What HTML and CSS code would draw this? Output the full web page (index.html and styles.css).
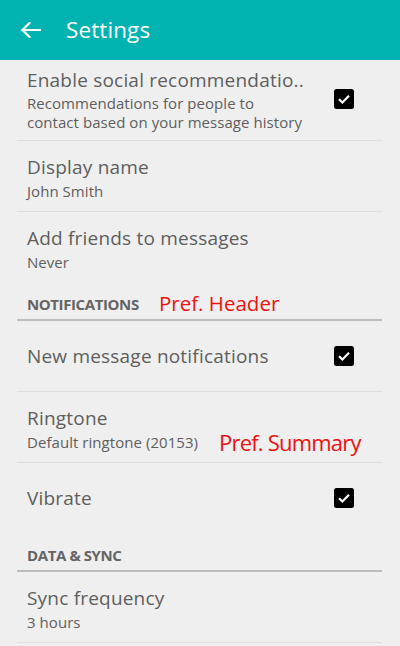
FILE: index.html
```html
<!DOCTYPE html>
<html lang="en">
<head>
<meta charset="utf-8">
<title>Settings</title>
<link rel="stylesheet" href="styles.css">
</head>
<body>
<header class="appbar">
  <svg class="back" width="20" height="16" viewBox="0 0 20 16" aria-hidden="true">
    <path d="M1.5 8H19M8.5 1L1.5 8L8.5 15" fill="none" stroke="#fff" stroke-width="2.2" stroke-linecap="square"/>
  </svg>
  <h1 class="title">Settings</h1>
</header>
<main class="list">
  <div class="pref pref-top pref-check">
    <div class="pref-text">
      <div class="pref-title">Enable social recommendatio..</div>
      <div class="pref-summary pref-summary-multi">
        <span class="summary-line">Recommendations for people to</span>
        <span class="summary-line">contact based on your message history</span>
      </div>
    </div>
    <span class="checkbox"><svg width="20" height="20" viewBox="0 0 20 20"><path d="M5 10.2L8.4 13.5L15 6.8" fill="none" stroke="#fff" stroke-width="2.2"/></svg></span>
  </div>
  <div class="pref">
    <div class="pref-title">Display name</div>
    <div class="pref-summary">John Smith</div>
  </div>
  <div class="pref pref-last">
    <div class="pref-title">Add friends to messages</div>
    <div class="pref-summary">Never</div>
  </div>
  <div class="category">
    <span class="category-title">NOTIFICATIONS</span>
    <span class="note note-header">Pref. Header</span>
  </div>
  <div class="pref pref-single pref-check">
    <div class="pref-title">New message notifications</div>
    <span class="checkbox"><svg width="20" height="20" viewBox="0 0 20 20"><path d="M5 10.2L8.4 13.5L15 6.8" fill="none" stroke="#fff" stroke-width="2.2"/></svg></span>
  </div>
  <div class="pref pref-annotated">
    <div class="pref-title">Ringtone</div>
    <div class="pref-summary">Default ringtone (20153)</div>
    <span class="note note-summary">Pref. Summary</span>
  </div>
  <div class="pref pref-single pref-check pref-last">
    <div class="pref-title">Vibrate</div>
    <span class="checkbox"><svg width="20" height="20" viewBox="0 0 20 20"><path d="M5 10.2L8.4 13.5L15 6.8" fill="none" stroke="#fff" stroke-width="2.2"/></svg></span>
  </div>
  <div class="category">
    <span class="category-title">DATA &amp; SYNC</span>
  </div>
  <div class="pref">
    <div class="pref-title">Sync frequency</div>
    <div class="pref-summary">3 hours</div>
  </div>
</main>
</body>
</html>
```
FILE: styles.css
```css
html, body {
  margin: 0;
  padding: 0;
}
body {
  background: #efefef;
  font-family: "Open Sans", "Noto Sans", sans-serif;
  color: #5e5e5e;
  height: 646px;
  overflow: hidden;
}
.appbar {
  height: 60px;
  background: #00b3b0;
  display: flex;
  align-items: center;
  padding-left: 21px;
  box-sizing: border-box;
}
.back {
  display: block;
  margin-top: -1px;
}
.title {
  margin: 0 0 0 25px;
  font-size: 22.5px;
  font-weight: 400;
  color: #fff;
  line-height: 28px;
  margin-top: -1px;
  letter-spacing: 0.1px;
}
.list {
  margin: 0 18px 0 17px;
}
.pref {
  position: relative;
  box-sizing: border-box;
  height: 71px;
  padding: 14px 0 0 10px;
  border-bottom: 1px solid #dedede;
}
.pref-last {
  border-bottom: none;
  height: 70px;
}
.pref-top {
  height: 81px;
  padding-top: 8px;
}
.pref-check {
  display: flex;
  align-items: center;
  justify-content: space-between;
  padding-right: 28px;
}
.pref-top.pref-check {
  align-items: flex-start;
}
.pref-top .checkbox {
  margin-top: 21px;
}
.pref-single {
  padding-top: 0;
}
.pref-title {
  font-size: 19px;
  line-height: 24px;
  letter-spacing: 0.2px;
  white-space: nowrap;
}
.pref-summary {
  font-size: 15px;
  line-height: 18px;
  margin-top: 3px;
  letter-spacing: 0.05px;
  white-space: nowrap;
}
.pref-summary-multi {
  display: flex;
  flex-direction: column;
  gap: 0;
  margin-top: 2px;
}
.summary-line {
  display: block;
  line-height: 19px;
  height: 18.5px;
}
.checkbox {
  width: 20px;
  height: 20px;
  border-radius: 2.5px;
  background: #000;
  flex: none;
  display: block;
}
.checkbox svg {
  display: block;
}
.category {
  position: relative;
  height: 39px;
  box-sizing: border-box;
  padding: 11px 0 0 10px;
  border-bottom: 2px solid #bdbdbd;
}
.category-title {
  font-size: 15px;
  line-height: 20px;
  font-weight: 700;
  color: #646464;
  letter-spacing: -0.4px;
}
.note {
  position: absolute;
  color: #ee1111;
  font-family: "Open Sans", sans-serif;
  white-space: nowrap;
}
.note-header {
  left: 142px;
  top: 3px;
  font-size: 20.5px;
  line-height: 36px;
}
.note-summary {
  left: 202px;
  top: 35px;
  font-size: 22px;
  line-height: 30px;
  letter-spacing: -0.8px;
}
```
